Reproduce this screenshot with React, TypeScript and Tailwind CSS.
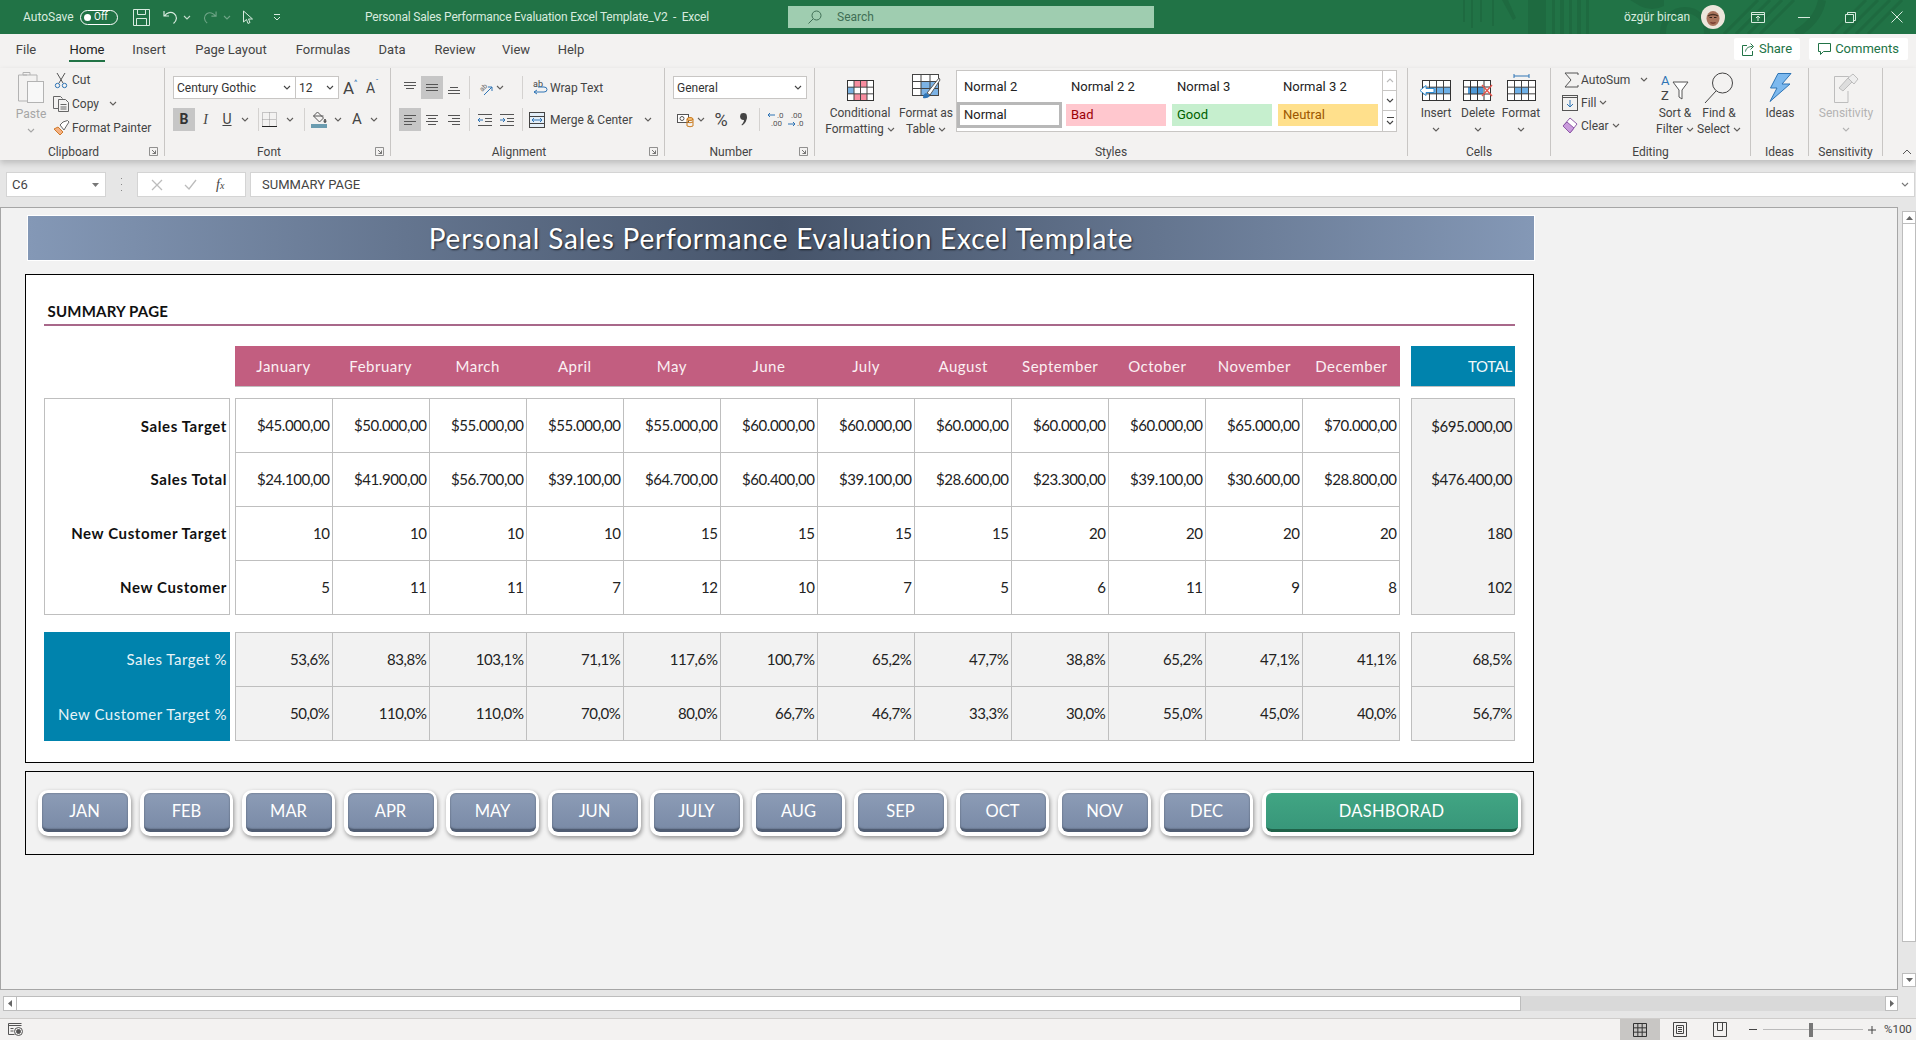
import type { ReactNode } from 'react';

const months = ['January', 'February', 'March', 'April', 'May', 'June', 'July', 'August', 'September', 'October', 'November', 'December'];

const rows = [
  { label: 'Sales Target', values: ['$45.000,00', '$50.000,00', '$55.000,00', '$55.000,00', '$55.000,00', '$60.000,00', '$60.000,00', '$60.000,00', '$60.000,00', '$60.000,00', '$65.000,00', '$70.000,00'], total: '$695.000,00' },
  { label: 'Sales Total', values: ['$24.100,00', '$41.900,00', '$56.700,00', '$39.100,00', '$64.700,00', '$60.400,00', '$39.100,00', '$28.600,00', '$23.300,00', '$39.100,00', '$30.600,00', '$28.800,00'], total: '$476.400,00' },
  { label: 'New Customer Target', values: ['10', '10', '10', '10', '15', '15', '15', '15', '20', '20', '20', '20'], total: '180' },
  { label: 'New Customer', values: ['5', '11', '11', '7', '12', '10', '7', '5', '6', '11', '9', '8'], total: '102' },
];

const percents = [
  { label: 'Sales Target %', values: ['53,6%', '83,8%', '103,1%', '71,1%', '117,6%', '100,7%', '65,2%', '47,7%', '38,8%', '65,2%', '47,1%', '41,1%'], total: '68,5%' },
  { label: 'New Customer Target %', values: ['50,0%', '110,0%', '110,0%', '70,0%', '80,0%', '66,7%', '46,7%', '33,3%', '30,0%', '55,0%', '45,0%', '40,0%'], total: '56,7%' },
];

const navButtons = ['JAN', 'FEB', 'MAR', 'APR', 'MAY', 'JUN', 'JULY', 'AUG', 'SEP', 'OCT', 'NOV', 'DEC'];

const tabs = [
  { name: 'File', width: 'w-[52px]' },
  { name: 'Home', width: 'w-[70px]' },
  { name: 'Insert', width: 'w-[54px]' },
  { name: 'Page Layout', width: 'w-[110px]' },
  { name: 'Formulas', width: 'w-[74px]' },
  { name: 'Data', width: 'w-[64px]' },
  { name: 'Review', width: 'w-[62px]' },
  { name: 'View', width: 'w-[60px]' },
  { name: 'Help', width: 'w-[50px]' },
];

function Chev({ color = '#605e5c' }: { color?: string }) {
  return (
    <svg width="8" height="5" viewBox="0 0 8 5" className="shrink-0">
      <path d="M1 1l3 3 3-3" fill="none" stroke={color} strokeWidth="1.1" />
    </svg>
  );
}

function Sep() {
  return <span className="block h-[23px] w-px shrink-0 bg-[#d4d2d0]" />;
}

// 16x16 icon made of horizontal lines
function Lines({ lines }: { lines: [number, number, number][] }) {
  return (
    <svg width="16" height="16" viewBox="0 0 16 16">
      {lines.map(([y, x1, x2], i) => (
        <path key={i} d={`M${x1} ${y + 0.5}H${x2}`} stroke="#555" strokeWidth="1" />
      ))}
    </svg>
  );
}

function GridIcon({ children, on, w = 29, h = 22 }: { children?: ReactNode; on?: ReactNode; w?: number; h?: number }) {
  const cw = (w - 1) / 4;
  const ch = (h - 1) / 3;
  return (
    <svg width={w} height={h + 6} viewBox={`0 -6 ${w} ${h + 6}`} className="overflow-visible">
      <rect x="0.5" y="0.5" width={w - 1} height={h - 1} fill="#fff" />
      {children}
      {[1, 2, 3].map(i => (
        <path key={i} d={`M${0.5 + i * cw} 0V${h}`} stroke="#444" strokeWidth="1" />
      ))}
      {[1, 2].map(i => (
        <path key={i} d={`M0 ${0.5 + i * ch}H${w}`} stroke="#444" strokeWidth="1" />
      ))}
      <rect x="0.5" y="0.5" width={w - 1} height={h - 1} fill="none" stroke="#333" />
      {on}
    </svg>
  );
}

function BigButton({ icon, lines, chevInline, noChev, width, color = 'text-[#444]', chevColor }: { icon: ReactNode; lines: string[]; chevInline?: boolean; noChev?: boolean; width: string; color?: string; chevColor?: string }) {
  return (
    <div className={`flex shrink-0 flex-col items-center pt-[2px] ${width} ${color}`}>
      <div className="flex h-[35px] items-center justify-center">{icon}</div>
      {lines.map((line, i) => (
        <div key={line} className="flex h-[16px] items-center gap-[3px] whitespace-nowrap leading-[16px]">
          {line}
          {chevInline && i === lines.length - 1 && <Chev color={chevColor} />}
        </div>
      ))}
      {!chevInline && !noChev && (
        <div className="flex h-[16px] items-center">
          <Chev color={chevColor} />
        </div>
      )}
    </div>
  );
}

function Launcher() {
  return (
    <svg width="9" height="9" viewBox="0 0 9 9" className="absolute right-[6px] top-[3px]">
      <path d="M0.5 8.5V.5h8v8z" fill="none" stroke="#777" strokeWidth="0.8" />
      <path d="M3 3l3.5 3.5M6.5 3.5v3h-3" fill="none" stroke="#555" strokeWidth="0.8" />
    </svg>
  );
}

function Group({ width, label, launcher, children }: { width: string; label: string; launcher?: boolean; children: ReactNode }) {
  return (
    <div className={`flex h-[88px] shrink-0 flex-col border-r border-[#c8c6c4] ${width}`}>
      <div className="flex h-[76px] min-h-[76px] shrink-0">{children}</div>
      <div className={`relative flex h-[15px] min-h-[15px] shrink-0 items-center justify-center text-[#444] ${launcher ? 'pr-[17px]' : ''}`}>
        {label}
        {launcher && <Launcher />}
      </div>
    </div>
  );
}

function SelectBox({ value, width }: { value: string; width: string }) {
  return (
    <div className={`flex h-[23px] shrink-0 items-center justify-between border border-[#c8c6c4] bg-white pl-[3px] pr-[4px] text-[#333] ${width}`}>
      <span>{value}</span>
      <Chev color="#444" />
    </div>
  );
}

function TitleBar() {
  return (
    <div className="relative flex h-[34px] shrink-0 items-center overflow-hidden bg-[#217346] text-[12px] text-[#d8ebdf]">
      <svg className="absolute left-[1440px] top-0" width="476" height="34" viewBox="0 0 476 34">
        <g fill="#1e6a40">
          <path d="M23 0h2v22h-2zM31 0h2v28h-2zM40 0h2v22h-2zM52 0h2v26h-2zM62 0l6 0 8 18-3 2z" />
          <path d="M88 0h18v34H88zM112 0h3v34h-3zM120 0h4v34h-4zM129 0h3v34h-3zM137 0h4v34h-4zM146 0h3v34h-3z" />
          <path d="M190 0h34v6q-12 6-24 0z" />
        </g>
        <circle cx="245" cy="32" r="22" fill="none" stroke="#1e6a40" strokeWidth="6" />
        <g stroke="#1e6a40" strokeWidth="3">
          <path d="M284 34L318 0M296 34L330 0M308 34L342 0M320 34L354 0" />
          <path d="M392 34L426 0M404 34L438 0M416 34L450 0M428 34L462 0" />
        </g>
        <path d="M356 34C372 24 380 12 382 0" fill="none" stroke="#1e6a40" strokeWidth="8" />
      </svg>

      <span className="relative ml-[23px] w-[57px] shrink-0">AutoSave</span>
      <span className="relative flex h-[15px] w-[38px] shrink-0 items-center rounded-full border border-white pl-[3px] text-[10px] leading-none text-white">
        <span className="mr-[3px] h-[7px] w-[7px] rounded-full bg-white" />
        Off
      </span>
      <svg className="relative ml-[15px] shrink-0" width="17" height="17" viewBox="0 0 17 17" fill="none" stroke="#d8ebdf">
        <path d="M.5.5h16v16H.5zM4.5.5v5h8v-5M3.5 16.5v-7h10v7" />
      </svg>
      <svg className="relative ml-[13px] shrink-0" width="15" height="15" viewBox="0 0 15 15" fill="none" stroke="#d8ebdf" strokeWidth="1.2">
        <path d="M1 1v5h5M1.5 6C4 2.5 8 1.5 11 3.5c3.5 2.5 3.2 7-.5 10" />
      </svg>
      <span className="relative ml-[5px] w-[8px]"><Chev color="#c5dccd" /></span>
      <svg className="relative ml-[12px] shrink-0" width="14" height="15" viewBox="0 0 15 15" fill="none" stroke="#6fa587" strokeWidth="1.2">
        <path d="M14 1v5H9M13.5 6C11 2.5 7 1.5 4 3.5c-3.5 2.5-3.2 7 .5 10" />
      </svg>
      <span className="relative ml-[6px] w-[8px]"><Chev color="#6fa587" /></span>
      <svg className="relative ml-[11px] shrink-0" width="12" height="15" viewBox="0 0 12 15" fill="none" stroke="#d8ebdf">
        <path d="M1.5 1v11l3-2.5 1.5 4 2-1-1.5-3.5h4z" />
      </svg>
      <svg className="relative ml-[19px] shrink-0" width="8" height="8" viewBox="0 0 8 8" fill="none" stroke="#d8ebdf">
        <path d="M1 1.5h6M1 4l3 3 3-3" />
      </svg>
      <span className="relative ml-[84px] w-[345px] shrink-0 whitespace-nowrap tracking-[-0.2px]">Personal Sales Performance Evaluation Excel Template_V2&nbsp; -&nbsp; Excel</span>
      <div className="relative ml-[78px] flex h-[22px] w-[366px] shrink-0 items-center bg-[#9fcdb0] text-[#3f6f55]">
        <svg className="ml-[20px]" width="14" height="14" viewBox="0 0 14 14" fill="none" stroke="#3f6f55">
          <circle cx="8.5" cy="5.5" r="4.5" />
          <path d="M5 9l-4.5 4.5" />
        </svg>
        <span className="ml-[15px]">Search</span>
      </div>
      <span className="relative ml-auto w-[66px] shrink-0 whitespace-nowrap">özgür bircan</span>
      <svg className="relative ml-[11px] shrink-0" width="24" height="24" viewBox="0 0 24 24">
        <circle cx="12" cy="12" r="12" fill="#ece6dc" />
        <ellipse cx="12" cy="13.5" rx="6.5" ry="7.5" fill="#a8735c" />
        <path d="M7 11q5-3 10 0" stroke="#4a3226" strokeWidth="1.4" fill="none" />
        <path d="M8.500 12.500h2.500M13 12.500h2.500" stroke="#2e2018" strokeWidth="1.2" />
        <path d="M9.500 17.500q2.500 1.200 5 0" stroke="#6a2e25" strokeWidth="1.2" fill="none" />
      </svg>
      <svg className="relative ml-[26px] shrink-0" width="14" height="11" viewBox="0 0 14 11" fill="none" stroke="#d8ebdf">
        <path d="M.5.5h13v10H.5zM.5 2.5h13M7 9V4M5 6l2-2 2 2" />
      </svg>
      <span className="relative ml-[33px] h-px w-[12px] shrink-0 bg-[#d8ebdf]" />
      <svg className="relative ml-[35px] shrink-0" width="11" height="11" viewBox="0 0 11 11" fill="none" stroke="#d8ebdf">
        <path d="M.5 2.5h8v8h-8zM2.5 2.5v-2h8v8h-2" />
      </svg>
      <svg className="relative ml-[35px] mr-[13px] shrink-0" width="12" height="12" viewBox="0 0 12 12" fill="none" stroke="#d8ebdf">
        <path d="M.5.5l11 11M11.5.5l-11 11" />
      </svg>
    </div>
  );
}

function Tabs() {
  return (
    <div className="flex h-[34px] shrink-0 text-[13px] text-[#444]">
      {tabs.map(tab => (
        <div key={tab.name} className={`flex shrink-0 flex-col items-center pt-[7px] ${tab.width}`}>
          {tab.name === 'Home' ? (
            <span className="h-[21px] border-b-[2px] border-[#217346] px-px leading-[18px] text-[#222]">{tab.name}</span>
          ) : (
            <span className="leading-[18px]">{tab.name}</span>
          )}
        </div>
      ))}
      <div className="ml-auto mr-[8px] mt-[4px] flex h-[22px] items-center gap-[9px] self-start text-[13px] text-[#217346]">
        <div className="flex h-[22px] w-[66px] items-center justify-center gap-[4px] rounded-[2px] bg-white">
          <svg width="13" height="13" viewBox="0 0 13 13" fill="none" stroke="#217346">
            <path d="M5 2.5H.5v10h10V8M3.5 8.5c.5-3 2.5-5 7-5M8.5.5l3 3-3 3" />
          </svg>
          Share
        </div>
        <div className="flex h-[22px] w-[99px] items-center justify-center gap-[4px] rounded-[2px] bg-white">
          <svg width="13" height="12" viewBox="0 0 13 12" fill="none" stroke="#217346">
            <path d="M.5.5h12v8H5.5l-3 3v-3h-2z" />
          </svg>
          Comments
        </div>
      </div>
    </div>
  );
}

function Ribbon() {
  return (
    <div className="relative z-10 flex h-[92px] shrink-0 items-start text-[12px] text-[#444] shadow-[0_3px_6px_rgba(0,0,0,0.18)]">
      <Group width="w-[165px]" label="Clipboard" launcher>
        <div className="ml-[14px] flex w-[34px] shrink-0 flex-col items-center pt-[3px] text-[#a6a6a6]">
          <svg width="30" height="33" viewBox="0 0 30 33" fill="none" stroke="#b3b3b3">
            <path d="M11 4H2.5v26H11" />
            <path d="M7 4V1.5h7V4zM14 4h7v6" />
            <rect x="11.5" y="10.5" width="16" height="21" fill="#f8f8f8" />
          </svg>
          <div className="mt-[2px] h-[16px] leading-[16px]">Paste</div>
          <div className="flex h-[16px] items-center"><Chev color="#a6a6a6" /></div>
        </div>
        <div className="ml-[5px] flex shrink-0 flex-col pt-0">
          <div className="flex h-[23px] items-center pt-[1px]">
            <svg className="mr-[3px]" width="16" height="17" viewBox="0 0 16 17" fill="none" stroke="#555">
              <path d="M4 1l6 10M12 1l-6 10" />
              <circle cx="4.5" cy="13.5" r="2.2" stroke="#2e74b5" />
              <circle cx="11.5" cy="13.5" r="2.2" stroke="#2e74b5" />
            </svg>
            Cut
          </div>
          <div className="flex h-[25px] items-center">
            <svg className="mr-[2px]" width="17" height="16" viewBox="0 0 17 16" fill="none" stroke="#666">
              <path d="M5 12.5H.5V.5h7l2 2" />
              <path d="M5.5 3.5h7l3 3v9h-10zM7.5 8.5h6M7.5 11h6M7.5 13h6" />
            </svg>
            Copy
            <span className="ml-[10px]"><Chev /></span>
          </div>
          <div className="flex h-[24px] items-center">
            <svg className="mr-[2px]" width="17" height="16" viewBox="0 0 17 16" fill="none">
              <path d="M5 7l5 5-3 3-6-6z" fill="#f4b183" stroke="#d07a2a" />
              <path d="M7 5l3-3 4.5-1.5L16 2l-2 3-3 5z" fill="#fff" stroke="#666" />
            </svg>
            Format Painter
          </div>
        </div>
      </Group>

      <Group width="w-[226px]" label="Font" launcher>
        <div className="flex flex-col pl-[8px]">
          <div className="mt-[8px] flex h-[23px] items-center">
            <SelectBox value="Century Gothic" width="w-[123px]" />
            <SelectBox value="12" width="w-[43px] border-l-0" />
            <span className="ml-[4px] flex w-[21px] items-start text-[17px] leading-[20px] text-[#444]">A<span className="text-[8px] leading-[10px] text-[#2e74b5]">^</span></span>
            <span className="ml-[2px] flex w-[19px] items-start text-[14px] leading-[20px] text-[#444]">A<span className="text-[8px] leading-[10px] text-[#2e74b5]">ˇ</span></span>
          </div>
          <div className="mt-[9px] flex h-[23px] items-center text-[14px]">
            <span className="flex h-[23px] w-[22px] shrink-0 items-center justify-center bg-[#c6c6c6] font-bold text-[#333]">B</span>
            <span className="flex w-[21px] shrink-0 justify-center font-['Liberation_Serif',serif] italic">I</span>
            <span className="flex w-[22px] shrink-0 justify-center underline">U</span>
            <span className="flex w-[14px] shrink-0 justify-center"><Chev /></span>
            <span className="ml-[6px]"><Sep /></span>
            <span className="flex w-[20px] shrink-0 justify-center">
              <svg width="15" height="15" viewBox="0 0 15 15" fill="none" stroke="#999" strokeDasharray="1 1">
                <path d="M.5.5h14v14H.5zM7.5.5v14M.5 7.5h14" />
                <path d="M0 14.5h15" stroke="#222" strokeDasharray="none" />
              </svg>
            </span>
            <span className="flex w-[22px] shrink-0 justify-center"><Chev /></span>
            <span className="ml-[3px]"><Sep /></span>
            <span className="flex w-[28px] shrink-0 flex-col items-center">
              <svg width="16" height="12" viewBox="0 0 16 12" fill="none" stroke="#555">
                <path d="M6.5 1l6 6-4 4-6-6zM2.5 5h10" />
                <path d="M14 8q1 1.5 1 2.5a1 1 0 0 1-2 0q0-1 1-2.5z" fill="#555" />
              </svg>
              <span className="mt-px h-[4px] w-[16px] bg-[#6a9cb0]" />
            </span>
            <span className="flex w-[10px] shrink-0 justify-center"><Chev /></span>
            <span className="flex w-[28px] shrink-0 justify-center text-[15px]">A</span>
            <span className="flex w-[6px] shrink-0 justify-center"><Chev /></span>
          </div>
        </div>
      </Group>

      <Group width="w-[274px]" label="Alignment" launcher>
        <div className="flex flex-col pl-[8px]">
          <div className="mt-[8px] flex h-[23px] items-center">
            <span className="flex w-[22px] justify-center"><Lines lines={[[2, 2, 14], [5, 2, 14], [8, 4, 12]]} /></span>
            <span className="flex h-[23px] w-[22px] items-center justify-center bg-[#c6c6c6]"><Lines lines={[[4, 2, 14], [7, 2, 14], [10, 2, 14]]} /></span>
            <span className="flex w-[22px] justify-center"><Lines lines={[[7, 4, 12], [10, 2, 14], [13, 2, 14]]} /></span>
            <span className="ml-[4px]"><Sep /></span>
            <svg className="ml-[8px] shrink-0 overflow-visible" width="16" height="16" viewBox="0 0 16 16" fill="none">
              <text x="1" y="10" fontSize="7" fill="#666" fontFamily="Roboto" transform="rotate(-45 5 7)">ab</text>
              <path d="M6 15l8-8M14 11V7h-4" stroke="#2e74b5" />
            </svg>
            <span className="flex w-[12px] justify-center"><Chev /></span>
            <span className="ml-[16px]"><Sep /></span>
            <svg className="ml-[9px] shrink-0" width="16" height="17" viewBox="0 0 16 17" fill="none">
              <text x="1" y="8" fontSize="9" fill="#444" fontFamily="Roboto">ab</text>
              <path d="M2 13h10q3 0 3-2.500t-3-2.500H6M5 11l-3 2 3 2" stroke="#2e74b5" />
            </svg>
            <span className="ml-[2px] whitespace-nowrap">Wrap Text</span>
          </div>
          <div className="mt-[9px] flex h-[23px] items-center">
            <span className="flex h-[23px] w-[22px] items-center justify-center bg-[#c6c6c6]"><Lines lines={[[3, 2, 14], [6, 2, 10], [9, 2, 14], [12, 2, 10]]} /></span>
            <span className="flex w-[22px] justify-center"><Lines lines={[[3, 2, 14], [6, 4, 12], [9, 2, 14], [12, 4, 12]]} /></span>
            <span className="flex w-[22px] justify-center"><Lines lines={[[3, 2, 14], [6, 6, 14], [9, 2, 14], [12, 6, 14]]} /></span>
            <span className="ml-[4px]"><Sep /></span>
            <svg className="ml-[6px] shrink-0" width="18" height="16" viewBox="0 0 18 16" fill="none" stroke="#555">
              <path d="M2 2.5h14M9 6.5h7M9 9.5h7M2 13.5h14" />
              <path d="M7 8H2M4 6L2 8l2 2" stroke="#2e74b5" />
            </svg>
            <svg className="ml-[4px] shrink-0" width="18" height="16" viewBox="0 0 18 16" fill="none" stroke="#555">
              <path d="M2 2.5h14M9 6.5h7M9 9.5h7M2 13.5h14" />
              <path d="M2 8h5M5 6l2 2-2 2" stroke="#2e74b5" />
            </svg>
            <span className="ml-[6px]"><Sep /></span>
            <svg className="ml-[6px] shrink-0" width="16" height="16" viewBox="0 0 16 16" fill="none" stroke="#444">
              <rect x=".5" y=".5" width="15" height="15" fill="#e3eef8" />
              <path d="M.5 4.5h15M.5 11.5h15" />
              <path d="M3 8h10M5 6L3 8l2 2M11 6l2 2-2 2" stroke="#2e74b5" />
            </svg>
            <span className="ml-[5px] w-[85px] whitespace-nowrap">Merge &amp; Center</span>
            <span className="ml-[9px]"><Chev /></span>
          </div>
        </div>
      </Group>

      <Group width="w-[150px]" label="Number" launcher>
        <div className="flex flex-col pl-[8px]">
          <div className="mt-[8px] flex h-[23px] items-center">
            <SelectBox value="General" width="w-[134px]" />
          </div>
          <div className="mt-[9px] flex h-[23px] items-center">
            <svg className="ml-[4px] shrink-0" width="17" height="16" viewBox="0 0 17 16" fill="none" stroke="#555">
              <rect x=".5" y="2.5" width="11" height="8" fill="#fff" />
              <circle cx="5" cy="6.5" r="2" />
              <ellipse cx="13" cy="7" rx="3" ry="1.5" fill="#f4c078" stroke="#c97a1e" />
              <path d="M10 7v7q3 1.500 6 0V7M10 10q3 1.500 6 0" stroke="#c97a1e" />
            </svg>
            <span className="flex w-[14px] shrink-0 justify-center"><Chev /></span>
            <span className="flex w-[26px] shrink-0 justify-center text-[18px] leading-none">%</span>
            <svg className="ml-[6px] shrink-0" width="7" height="13" viewBox="0 0 7 13" fill="#444">
              <circle cx="3.500" cy="3.500" r="3.400" />
              <path d="M7 3.500q0 6-5 9l-.5-.8Q4.500 9 4 5z" />
            </svg>
            <span className="ml-[12px]"><Sep /></span>
            <svg className="ml-[6px] shrink-0" width="20" height="17" viewBox="0 0 20 17" fill="none">
              <path d="M9 4H2M4 2L2 4l2 2" stroke="#2e74b5" />
              <text x="11" y="7" fontSize="8" fill="#555" fontFamily="Roboto">.0</text>
              <text x="5" y="15" fontSize="8" fill="#555" fontFamily="Roboto">.00</text>
            </svg>
            <svg className="shrink-0" width="20" height="17" viewBox="0 0 20 17" fill="none">
              <text x="5" y="7" fontSize="8" fill="#555" fontFamily="Roboto">.00</text>
              <path d="M2 13h7M7 11l2 2-2 2" stroke="#2e74b5" />
              <text x="11" y="15" fontSize="8" fill="#555" fontFamily="Roboto">.0</text>
            </svg>
          </div>
        </div>
      </Group>

      <Group width="w-[593px]" label="Styles">
        <BigButton
          width="ml-[7px] w-[76px]"
          chevInline
          lines={['Conditional', 'Formatting']}
          icon={
            <GridIcon w={27} h={21}>
              <rect x="7" y="0" width="13" height="7" fill="#f78d9f" />
              <rect x="0" y="7" width="7" height="7" fill="#79b0e0" />
              <rect x="7" y="14" width="13" height="7" fill="#f78d9f" />
            </GridIcon>
          }
        />
        <BigButton
          width="w-[56px]"
          chevInline
          lines={['Format as', 'Table']}
          icon={
            <svg width="29" height="27" viewBox="0 0 29 27" fill="none">
              <rect x=".5" y=".5" width="26" height="21" fill="#fff" stroke="#444" />
              <rect x="9" y="7" width="17" height="14" fill="#7cb2e4" />
              <path d="M9 .5v21M18 .5v21M.5 7.500h26M.5 14.500h26" stroke="#444" />
              <path d="M27 4L15 19l3 2L28 6z" fill="#fff" stroke="#555" />
              <path d="M14 19q-3 1-3 5 4 1 7-2z" fill="#2e74b5" />
            </svg>
          }
        />
        <div className="ml-[2px] mt-[2px] flex h-[62px] w-[441px] shrink-0 border border-[#c8c6c4] bg-white text-[13px] text-[#222]">
          <div className="grid w-[425px] shrink-0 grid-cols-[109px_106px_106px_104px] grid-rows-[31px_29px]">
            <div className="flex items-center pl-[7px]">Normal 2</div>
            <div className="flex items-center pl-[5px]">Normal 2 2</div>
            <div className="flex items-center pl-[5px]">Normal 3</div>
            <div className="flex items-center pl-[5px]">Normal 3 2</div>
            <div className="flex h-[26px] w-[105px] items-center border-[3px] border-[#b8b8b8] pl-[4px]">Normal</div>
            <div className="mt-[2px] flex h-[22px] w-[100px] items-center bg-[#ffc7ce] pl-[5px] text-[#9c0006]">Bad</div>
            <div className="mt-[2px] flex h-[22px] w-[100px] items-center bg-[#c6efce] pl-[5px] text-[#006100]">Good</div>
            <div className="mt-[2px] flex h-[22px] w-[100px] items-center bg-[#ffe08c] pl-[5px] text-[#9c5700]">Neutral</div>
          </div>
          <div className="flex w-[15px] shrink-0 flex-col border-l border-[#c8c6c4]">
            <div className="flex h-[20px] items-center justify-center border-b border-[#c8c6c4]">
              <span className="rotate-180"><Chev color="#bbb" /></span>
            </div>
            <div className="flex h-[20px] items-center justify-center border-b border-[#c8c6c4]"><Chev color="#444" /></div>
            <div className="flex flex-1 flex-col items-center justify-center gap-[2px]">
              <span className="h-px w-[7px] bg-[#444]" />
              <Chev color="#444" />
            </div>
          </div>
        </div>
      </Group>

      <Group width="w-[143px]" label="Cells">
        <BigButton
          width="ml-[7px] w-[42px]"
          lines={['Insert']}
          icon={
            <GridIcon
              w={29}
              h={21}
              on={<path d="M-2 10.500L4 5.500V8.500H12V12.500H4V15.500Z" fill="#fff" stroke="#2e8bd0" />}
            >
              <rect x="7" y="7" width="22" height="7" fill="#6fb1e8" />
            </GridIcon>
          }
        />
        <BigButton
          width="w-[42px]"
          lines={['Delete']}
          icon={
            <svg width="30" height="27" viewBox="0 -6 30 27" fill="none">
              <rect x=".5" y=".5" width="27" height="20" fill="#fff" stroke="#333" />
              <rect x="5" y="7" width="15" height="7" fill="#4f9ad8" />
              <path d="M7.500 0v21M14.500 0v21M21 0v21M0 7h28M0 14h28" stroke="#333" />
              <path d="M19 5l10 11M29 5L19 16" stroke="#e8554e" strokeWidth="1.400" />
            </svg>
          }
        />
        <BigButton
          width="w-[44px]"
          lines={['Format']}
          icon={
            <GridIcon
              w={29}
              h={21}
              on={<path d="M7 -4H22M7 -6V-2M22 -6V-2" stroke="#2e74b5" fill="none" />}
            >
              <rect x="7" y="7" width="15" height="7" fill="#6fb1e8" />
            </GridIcon>
          }
        />
      </Group>

      <Group width="w-[200px]" label="Editing">
        <div className="ml-[11px] flex w-[91px] shrink-0 flex-col">
          <div className="flex h-[23px] items-center">
            <svg className="ml-[2px] shrink-0" width="15" height="16" viewBox="0 0 15 16" fill="none" stroke="#555">
              <path d="M14 3V1H1l6 7-6 7h13v-2" />
            </svg>
            <span className="ml-[2px] w-[50px] whitespace-nowrap">AutoSum</span>
            <span className="ml-[9px]"><Chev /></span>
          </div>
          <div className="flex h-[23px] items-center">
            <svg className="shrink-0" width="16" height="16" viewBox="0 0 16 16" fill="none" stroke="#555">
              <rect x=".5" y=".5" width="15" height="15" />
              <path d="M.5 2.500h15" />
              <path d="M8 5v7M5 9l3 3 3-3" stroke="#2e74b5" />
            </svg>
            <span className="ml-[3px]">Fill</span>
            <span className="ml-[3px]"><Chev /></span>
          </div>
          <div className="flex h-[23px] items-center">
            <svg className="shrink-0" width="16" height="17" viewBox="0 0 16 17" fill="none">
              <path d="M1 9l7-8 7 6-7 9z" fill="#fff" stroke="#8e5aa8" />
              <path d="M1 9l4-4 7 6-4 5z" fill="#c99bdc" stroke="#8e5aa8" />
            </svg>
            <span className="ml-[3px]">Clear</span>
            <span className="ml-[3px]"><Chev /></span>
          </div>
        </div>
        <BigButton
          width="w-[44px]"
          chevInline
          lines={['Sort &', 'Filter']}
          icon={
            <svg width="30" height="30" viewBox="0 0 30 30" fill="none">
              <text x="1" y="12" fontSize="13" fill="#2e74b5" fontFamily="Roboto">A</text>
              <text x="1" y="27" fontSize="13" fill="#444" fontFamily="Roboto">Z</text>
              <path d="M13 9h15l-6 8v9l-3-2v-7z" stroke="#555" fill="#fff" />
            </svg>
          }
        />
        <BigButton
          width="w-[44px]"
          chevInline
          lines={['Find &', 'Select']}
          icon={
            <svg width="30" height="32" viewBox="0 0 30 32" fill="none" stroke="#444">
              <circle cx="18.500" cy="11" r="10" />
              <path d="M12 19L1 31" />
            </svg>
          }
        />
      </Group>

      <Group width="w-[58px]" label="Ideas">
        <BigButton
          width="w-[58px]"
          lines={['Ideas']}
          noChev
          icon={
            <svg width="23" height="29" viewBox="0 0 23 29" fill="#7db9ee" stroke="#2e74b5">
              <path d="M9 .5h13L13 11h8L1 28.500 8 15H1.500z" />
            </svg>
          }
        />
      </Group>

      <Group width="w-[74px]" label="Sensitivity">
        <BigButton
          width="w-[74px]"
          lines={['Sensitivity']}
          color="text-[#b3b3b3]"
          chevColor="#b3b3b3"
          icon={
            <svg width="25" height="30" viewBox="0 0 25 30" fill="none" stroke="#bdbdbd">
              <path d="M.5 3.500h14V6M.5 3.500v26h13.500V18" />
              <path d="M5 15l9-10 4 4-9 9z" fill="#ddd" />
              <path d="M14 5l5-4 5 5-4 5z" fill="#eee" />
            </svg>
          }
        />
      </Group>

      <svg className="ml-[19px] mt-[81px] shrink-0" width="10" height="6" viewBox="0 0 10 6" fill="none" stroke="#555">
        <path d="M1 5l4-4 4 4" />
      </svg>
    </div>
  );
}

function FormulaBar() {
  return (
    <div className="flex h-[47px] shrink-0 items-start bg-[#e6e6e6] pt-[12px] text-[13px] text-[#444]">
      <div className="ml-[6px] flex h-[25px] w-[100px] shrink-0 items-center justify-between border border-[#d4d4d4] bg-white pl-[5px] pr-[6px]">
        C6
        <svg width="7" height="4" viewBox="0 0 7 4" fill="#777"><path d="M0 0h7L3.500 4z" /></svg>
      </div>
      <div className="ml-[15px] mt-[6px] flex h-[13px] w-px flex-col justify-between">
        <span className="h-px w-px bg-[#888]" />
        <span className="h-px w-px bg-[#888]" />
        <span className="h-px w-px bg-[#888]" />
      </div>
      <div className="ml-[15px] flex h-[25px] w-[109px] shrink-0 items-center border border-[#d4d4d4] bg-white">
        <svg className="ml-[13px]" width="12" height="12" viewBox="0 0 12 12" fill="none" stroke="#bcbcbc" strokeWidth="1.300">
          <path d="M1 1l10 10M11 1L1 11" />
        </svg>
        <svg className="ml-[21px]" width="13" height="11" viewBox="0 0 13 11" fill="none" stroke="#bcbcbc" strokeWidth="1.300">
          <path d="M1 6l4 4 7-9" />
        </svg>
        <span className="ml-[19px] font-['Liberation_Serif',serif] text-[14px] italic">f<span className="text-[10px]">x</span></span>
      </div>
      <div className="ml-[4px] flex h-[25px] w-[1665px] shrink-0 items-center justify-between border border-[#d4d4d4] bg-white pl-[11px] pr-[5px]">
        SUMMARY PAGE
        <Chev color="#777" />
      </div>
    </div>
  );
}

function Cell({ value, shaded }: { value: string; shaded?: boolean }) {
  return (
    <div className={`flex items-center justify-end border-b border-r border-[#bfbfbf] pr-[2.5px] tracking-[-0.4px] text-[#222] ${shaded ? 'bg-[#f2f2f2]' : ''}`}>
      {value}
    </div>
  );
}

function Sheet() {
  return (
    <div className="flex min-h-0 flex-1 bg-[#e6e6e6]">
      <div className="h-[783px] w-[1898px] shrink-0 border border-[#a6a6a6] bg-[#f2f2f2] pl-[24px] pt-[7px] font-['Lato',sans-serif] text-[15px]">
        {/* banner */}
        <div className="ml-[2px] flex h-[46px] w-[1508px] items-center justify-center border border-white bg-gradient-to-r from-[#8498b6] via-[#46546a] to-[#8498b6] text-[28px] tracking-[0.8px] text-white [text-shadow:1px_1px_2px_rgba(0,0,0,0.7)]">
          Personal Sales Performance Evaluation Excel Template
        </div>

        {/* summary card */}
        <div className="mt-[13px] h-[489px] w-[1509px] border-[1.5px] border-black bg-white pl-[17.5px]">
          <div className="flex h-[51px] w-[1471px] items-end border-b-2 border-[#a8688a] pb-[2px] pl-[4px] text-[15px] font-bold tracking-[0.2px] text-[#111]">
            SUMMARY PAGE
          </div>

          <div className="mt-[20px] flex w-[1471px]">
            <div className="ml-[191.5px] grid h-[41px] w-[1165px] grid-cols-12 items-center border-b border-[#bfbfbf] bg-[#c25e80] text-[#fbf0f3]">
              {months.map(m => (
                <div key={m} className="text-center tracking-[0.5px]">{m}</div>
              ))}
            </div>
            <div className="ml-[10.5px] flex h-[41px] w-[104px] items-center justify-end border-b border-[#bfbfbf] bg-[#0083ad] pr-[2.5px] tracking-[-0.3px] text-[#f2f9fb]">
              TOTAL
            </div>
          </div>

          <div className="mt-[11px] flex w-[1471px]">
            <div className="grid h-[217px] w-[186px] grid-rows-4 border border-[#bfbfbf] font-bold tracking-[0.6px] text-[#111]">
              {rows.map(r => (
                <div key={r.label} className="flex items-center justify-end pr-[1.5px]">{r.label}</div>
              ))}
            </div>
            <div className="ml-[5.5px] grid h-[217px] w-[1165px] grid-cols-12 grid-rows-4 border-l border-t border-[#bfbfbf]">
              {rows.flatMap(r => r.values.map((v, i) => <Cell key={r.label + i} value={v} />))}
            </div>
            <div className="ml-[10.5px] grid h-[217px] w-[104px] grid-rows-4 border border-[#bfbfbf] bg-[#f2f2f2] tracking-[-0.4px] text-[#222]">
              {rows.map(r => (
                <div key={r.label} className="flex items-center justify-end pr-[1.5px]">{r.total}</div>
              ))}
            </div>
          </div>

          <div className="mt-[17px] flex w-[1471px]">
            <div className="grid h-[109px] w-[186px] grid-rows-2 bg-[#0083ad] tracking-[0.5px] text-[#e8f4f8]">
              {percents.map(r => (
                <div key={r.label} className="flex items-center justify-end pr-[2.5px]">{r.label}</div>
              ))}
            </div>
            <div className="ml-[5.5px] grid h-[109px] w-[1165px] grid-cols-12 grid-rows-2 border-l border-t border-[#bfbfbf] bg-[#f2f2f2]">
              {percents.flatMap(r => r.values.map((v, i) => <Cell key={r.label + i} value={v} shaded />))}
            </div>
            <div className="ml-[10.5px] grid h-[109px] w-[104px] grid-rows-2 border-l border-r border-t border-[#bfbfbf] bg-[#f2f2f2]">
              {percents.map(r => (
                <div key={r.label} className="flex items-center justify-end border-b border-[#bfbfbf] pr-[1.5px] tracking-[-0.4px] text-[#222]">{r.total}</div>
              ))}
            </div>
          </div>
        </div>

        {/* month buttons */}
        <div className="mt-[7.5px] flex h-[84px] w-[1509px] items-center gap-[9px] border-[1.5px] border-black bg-[#f2f2f2] pl-[12px]">
          {navButtons.map(b => (
            <div key={b} className="h-[46px] w-[93px] shrink-0 rounded-[10px] bg-white p-[3.5px] shadow-[1px_2px_4px_rgba(0,0,0,0.4)]">
              <div className="flex h-full items-center justify-center rounded-[6px] border-b-[3px] border-[#4f5c72] bg-gradient-to-b from-[#8c9cb6] to-[#7a8ba7] text-[16.5px] text-white shadow-[inset_0_0_2px_rgba(0,0,0,0.4)]">
                {b}
              </div>
            </div>
          ))}
          <div className="h-[46px] w-[259px] shrink-0 rounded-[10px] bg-white p-[3.5px] shadow-[1px_2px_4px_rgba(0,0,0,0.4)]">
            <div className="flex h-full items-center justify-center rounded-[6px] border-b-[3px] border-[#1f6249] bg-gradient-to-b from-[#41a583] to-[#38977a] text-[16.5px] tracking-[0.3px] text-white">
              DASHBORAD
            </div>
          </div>
        </div>
      </div>

      {/* vertical scrollbar */}
      <div className="ml-[4px] flex h-[783px] w-[14px] shrink-0 flex-col pt-[4px]">
        <div className="flex h-[13px] items-center justify-center border border-[#bdbdbd] bg-white">
          <svg width="7" height="4" viewBox="0 0 7 4" fill="#666"><path d="M3.500 0L7 4H0z" /></svg>
        </div>
        <div className="h-[718px] border-x border-b border-[#bdbdbd] bg-white" />
        <div className="h-[31px]" />
        <div className="flex h-[14px] items-center justify-center border border-[#bdbdbd] bg-white">
          <svg width="7" height="4" viewBox="0 0 7 4" fill="#666"><path d="M0 0h7L3.500 4z" /></svg>
        </div>
      </div>
    </div>
  );
}

function HorizontalScroll() {
  return (
    <div className="flex h-[28px] shrink-0 items-start bg-[#e6e6e6] pt-[6px]">
      <div className="ml-[3px] flex h-[15px] w-[14px] shrink-0 items-center justify-center border border-[#bdbdbd] bg-white">
        <svg width="4" height="7" viewBox="0 0 4 7" fill="#666"><path d="M4 0v7L0 3.500z" /></svg>
      </div>
      <div className="h-[15px] w-[1504px] shrink-0 border-b border-r border-t border-[#bdbdbd] bg-white" />
      <div className="h-[15px] w-[364px] shrink-0 bg-[#d9d9d9]" />
      <div className="flex h-[15px] w-[13px] shrink-0 items-center justify-center border border-[#bdbdbd] bg-white">
        <svg width="4" height="7" viewBox="0 0 4 7" fill="#666"><path d="M0 0v7l4-3.500z" /></svg>
      </div>
    </div>
  );
}

function StatusBar() {
  return (
    <div className="flex h-[22px] shrink-0 items-center border-t border-[#cfcdcb] bg-[#f3f2f1] text-[11.5px] text-[#444]">
      <svg className="ml-[8px] shrink-0" width="15" height="15" viewBox="0 0 15 15" fill="none" stroke="#555">
        <path d="M.5 1.500h13M.5 3.500h13M.5 1.500v11h6M2.500 6.500h3M2.500 9h3" />
        <circle cx="10.500" cy="9.500" r="4" />
        <circle cx="10.500" cy="9.500" r="2" fill="#555" />
      </svg>
      <div className="ml-auto flex h-full w-[40px] shrink-0 items-center justify-center bg-[#c8c6c4]">
        <svg width="14" height="14" viewBox="0 0 14 14" fill="none" stroke="#333">
          <path d="M.5.500h13v13H.5zM4.830.500v13M9.170.500v13M.5 4.830h13M.5 9.170h13" />
        </svg>
      </div>
      <svg className="ml-[13px] shrink-0" width="14" height="15" viewBox="0 0 14 15" fill="none" stroke="#444">
        <path d="M.5.500h13v14H.5zM3.500 3.500h7v8h-7zM5 5.500h4M5 7.500h4M5 9.500h4" />
      </svg>
      <svg className="ml-[26px] shrink-0" width="14" height="15" viewBox="0 0 14 15" fill="none" stroke="#444">
        <path d="M.5.500h13v14H.5zM4.500.500v8h5v-8" />
      </svg>
      <span className="ml-[22px] h-px w-[8px] shrink-0 bg-[#444]" />
      <div className="relative ml-[6px] flex h-[14px] w-[100px] shrink-0 items-center">
        <span className="h-px w-full bg-[#bbb]" />
        <span className="absolute left-[46px] h-[14px] w-[4px] bg-[#777]" />
      </div>
      <svg className="ml-[5px] shrink-0" width="8" height="8" viewBox="0 0 8 8" stroke="#444">
        <path d="M0 4h8M4 0v8" />
      </svg>
      <span className="ml-[8px] mr-[4px] w-[28px] shrink-0">%100</span>
    </div>
  );
}

export default function App() {
  return (
    <div className="flex h-[1040px] w-[1916px] flex-col overflow-hidden bg-[#f3f2f1] font-['Roboto',sans-serif]">
      <TitleBar />
      <Tabs />
      <Ribbon />
      <FormulaBar />
      <Sheet />
      <HorizontalScroll />
      <StatusBar />
    </div>
  );
}
